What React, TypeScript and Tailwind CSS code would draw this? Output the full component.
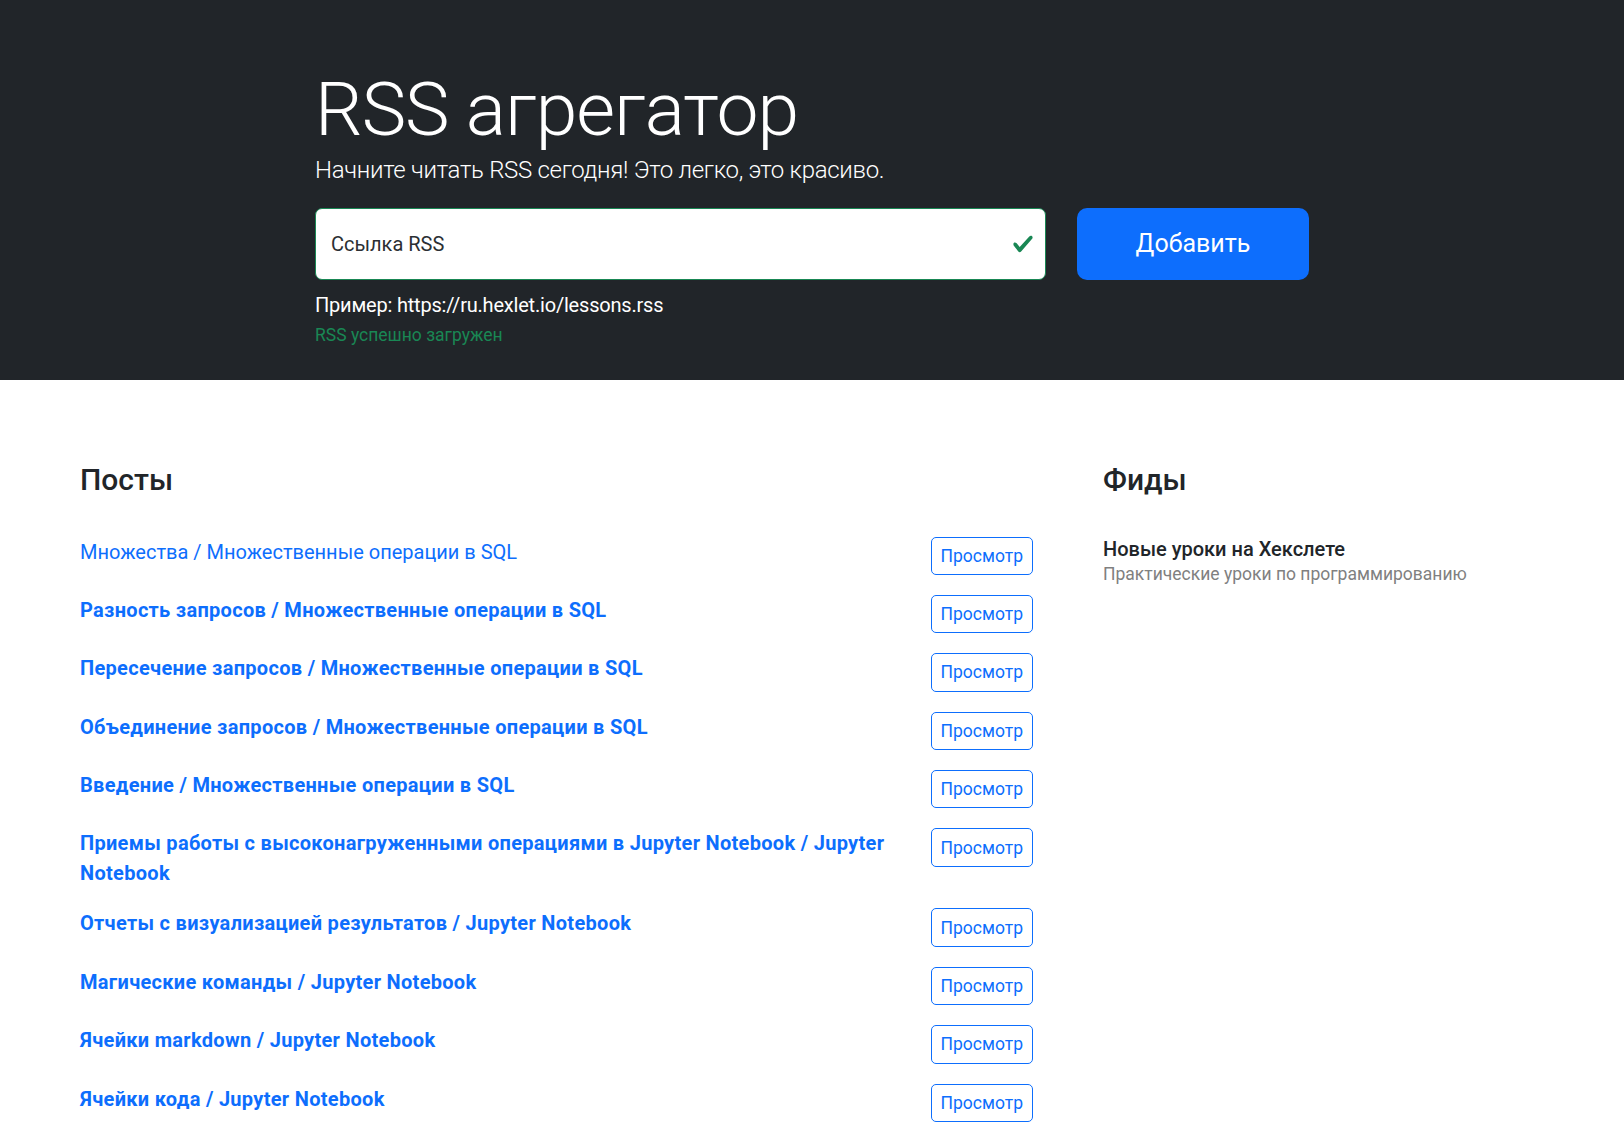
import React from "react";

const posts: { title: string; read?: boolean }[] = [
  { title: "Множества / Множественные операции в SQL", read: true },
  { title: "Разность запросов / Множественные операции в SQL" },
  { title: "Пересечение запросов / Множественные операции в SQL" },
  { title: "Объединение запросов / Множественные операции в SQL" },
  { title: "Введение / Множественные операции в SQL" },
  {
    title:
      "Приемы работы с высоконагруженными операциями в Jupyter Notebook / Jupyter Notebook",
  },
  { title: "Отчеты с визуализацией результатов / Jupyter Notebook" },
  { title: "Магические команды / Jupyter Notebook" },
  { title: "Ячейки markdown / Jupyter Notebook" },
  { title: "Ячейки кода / Jupyter Notebook" },
];

function CheckIcon() {
  return (
    <svg viewBox="0 0 8 8" className="h-[22px] w-[22px]">
      <path
        fill="#198754"
        d="M2.3 6.73.6 4.53c-.4-1.04.46-1.4 1.1-.8l1.1 1.4 3.4-3.8c.6-.63 1.6-.27 1.2.7l-4 4.6c-.43.5-.8.4-1.1.1z"
      />
    </svg>
  );
}

export default function App() {
  return (
    <div className="min-h-screen bg-white font-['Roboto','Open_Sans',sans-serif] text-[20px] leading-[1.5] text-[#212529]">
      <section className="bg-[#212529] px-[60px] pt-[60px] pb-[32px]">
        <div className="mx-auto w-[994px]">
          <h1 className="text-[75px] font-light leading-[98px] tracking-[-1px] text-white">
            RSS агрегатор
          </h1>
          <p className="mb-[25px] text-[24px] font-light leading-[25px] tracking-[-0.3px] text-white">
            Начните читать RSS сегодня! Это легко, это красиво.
          </p>
          <form className="flex gap-[31px]" onSubmit={(e) => e.preventDefault()}>
            <div className="flex h-[72px] flex-1 items-center rounded-[7px] border border-[#198754] bg-white pl-[15px] pr-[11px]">
              <input
                type="text"
                placeholder="Ссылка RSS"
                className="h-full flex-1 bg-transparent text-[20px] text-[#212529] outline-none placeholder:text-[#2b2f33]"
              />
              <CheckIcon />
            </div>
            <button
              type="submit"
              className="h-[72px] w-[232px] rounded-[10px] bg-[#0d6efd] text-[25px] text-white"
            >
              Добавить
            </button>
          </form>
          <p className="mt-[10px] leading-[30px] tracking-[-0.2px] text-white">
            Пример: https://ru.hexlet.io/lessons.rss
          </p>
          <p className="mt-[2px] text-[17.5px] leading-[26px] text-[#198754]">
            RSS успешно загружен
          </p>
        </div>
      </section>

      <div className="flex gap-[30px] px-[60px] pt-[60px] pb-[60px]">
        <div className="w-[993px] shrink-0">
          <div className="px-[20px] pt-[20px]">
            <h2 className="mb-[26.5px] text-[30px] font-medium leading-[40px] text-[#212529]">
              Посты
            </h2>
          </div>
          <ul>
            {posts.map((p) => (
              <li
                key={p.title}
                className="flex items-start justify-between gap-[20px] px-[20px] py-[10px]"
              >
                <a
                  href="#"
                  className={`leading-[30px] text-[#0d6efd] ${
                    p.read ? "font-normal" : "font-bold tracking-[0.3px]"
                  }`}
                >
                  {p.title}
                </a>
                <button
                  type="button"
                  className="flex h-[38.4px] w-[102.4px] shrink-0 items-center justify-center rounded-[5px] border border-[#0d6efd] text-[17.5px] text-[#0d6efd]"
                >
                  Просмотр
                </button>
              </li>
            ))}
          </ul>
        </div>

        <div className="flex-1">
          <div className="px-[20px] pt-[20px]">
            <h2 className="mb-[26.5px] text-[30px] font-medium leading-[40px] text-[#212529]">
              Фиды
            </h2>
          </div>
          <ul>
            <li className="px-[20px] py-[10px]">
              <h3 className="text-[20px] font-medium leading-[24px] text-[#212529]">
                Новые уроки на Хекслете
              </h3>
              <p className="text-[17.5px] leading-[26px] text-[#808080]">
                Практические уроки по программированию
              </p>
            </li>
          </ul>
        </div>
      </div>
    </div>
  );
}
